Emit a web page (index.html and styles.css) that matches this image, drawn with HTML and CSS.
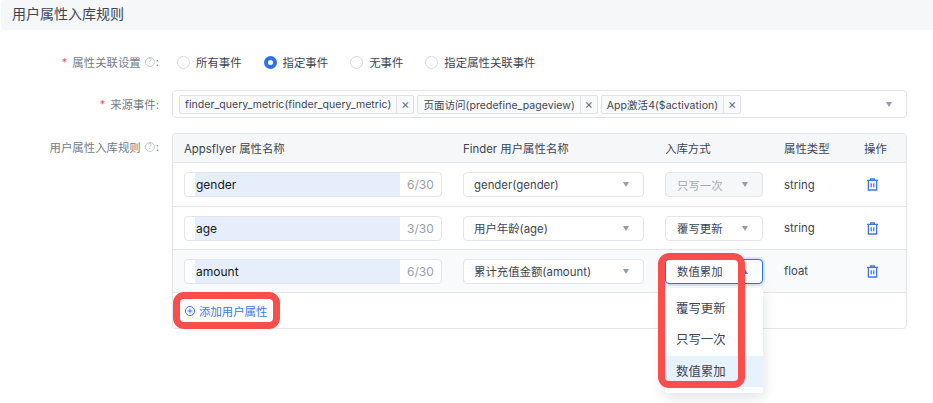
FILE: index.html
```html
<!DOCTYPE html>
<html lang="zh">
<head>
<meta charset="utf-8">
<title>用户属性入库规则</title>
<link rel="stylesheet" href="styles.css">
</head>
<body>
<div class="title-bar">用户属性入库规则</div>
<form class="form">
  <div class="form-row row-radio">
    <div class="label"><span class="req">*</span>属性关联设置<span class="help">?</span>:</div>
    <div class="radios">
      <span class="radio-item"><i class="radio"></i>所有事件</span>
      <span class="radio-item"><i class="radio on"></i>指定事件</span>
      <span class="radio-item"><i class="radio"></i>无事件</span>
      <span class="radio-item"><i class="radio"></i>指定属性关联事件</span>
    </div>
  </div>
  <div class="form-row row-source">
    <div class="label"><span class="req">*</span>来源事件:</div>
    <div class="multi">
      <span class="tag"><span class="tag-text">finder_query_metric(finder_query_metric)</span><span class="tag-x">×</span></span>
      <span class="tag"><span class="tag-text">页面访问(predefine_pageview)</span><span class="tag-x">×</span></span>
      <span class="tag"><span class="tag-text">App激活4($activation)</span><span class="tag-x">×</span></span>
      <i class="arrow multi-arrow"></i>
    </div>
  </div>
  <div class="form-row">
    <div class="label label-top">用户属性入库规则<span class="help">?</span>:</div>
    <div class="table">
      <div class="tr th">
        <div>Appsflyer 属性名称</div>
        <div>Finder 用户属性名称</div>
        <div>入库方式</div>
        <div>属性类型</div>
        <div>操作</div>
      </div>
      <div class="tr first">
        <div class="input"><span class="input-text">gender</span><span class="count">6/30</span></div>
        <div class="select"><span>gender(gender)</span><i class="arrow"></i></div>
        <div class="select mode disabled"><span>只写一次</span><i class="arrow"></i></div>
        <div>string</div>
        <div><svg class="trash" viewBox="0 0 12 14"><path d="M0 2.500H12M4 2.500V.8H8V2.500M1.500 2.500V13H10.500V2.500M4.600 5.500V10M7.400 5.500V10" fill="none" stroke="#3d75f0" stroke-width="1.4"/></svg></div>
      </div>
      <div class="tr">
        <div class="input"><span class="input-text">age</span><span class="count">3/30</span></div>
        <div class="select"><span>用户年龄(age)</span><i class="arrow"></i></div>
        <div class="select mode"><span>覆写更新</span><i class="arrow"></i></div>
        <div>string</div>
        <div><svg class="trash" viewBox="0 0 12 14"><path d="M0 2.500H12M4 2.500V.8H8V2.500M1.500 2.500V13H10.500V2.500M4.600 5.500V10M7.400 5.500V10" fill="none" stroke="#3d75f0" stroke-width="1.4"/></svg></div>
      </div>
      <div class="tr active">
        <div class="input"><span class="input-text">amount</span><span class="count">6/30</span></div>
        <div class="select"><span>累计充值金额(amount)</span><i class="arrow"></i></div>
        <div class="mode-cell">
          <div class="select mode focus"><span>数值累加</span><i class="arrow up"></i></div>
          <div class="menu">
            <div class="opt">覆写更新</div>
            <div class="opt">只写一次</div>
            <div class="opt sel">数值累加</div>
          </div>
          <div class="mark mark-menu"></div>
        </div>
        <div>float</div>
        <div><svg class="trash" viewBox="0 0 12 14"><path d="M0 2.500H12M4 2.500V.8H8V2.500M1.500 2.500V13H10.500V2.500M4.600 5.500V10M7.400 5.500V10" fill="none" stroke="#3d75f0" stroke-width="1.4"/></svg></div>
      </div>
      <div class="add-row">
        <span class="add"><svg class="plus" viewBox="0 0 12 12"><circle cx="6" cy="6" r="4.600" fill="none" stroke="#3d75f0"/><path d="M3.500 6H8.500M6 3.500V8.500" stroke="#3d75f0"/></svg>添加用户属性<span class="mark mark-add"></span></span>
      </div>
    </div>
  </div>
</form>
</body>
</html>
```
FILE: styles.css
```css
* { box-sizing: border-box; }
html, body { margin: 0; height: 403px; overflow: hidden; background: #fff; }
body {
  font-family: "Inter", "Noto Sans CJK SC", sans-serif;
  font-size: 11.4px;
  color: #3d4453;
  padding-left: 1px;
}
.title-bar {
  height: 30px;
  line-height: 28px;
  padding-left: 11px;
  font-size: 14px;
  color: #3d4453;
  background: #f6f7f9;
  border-radius: 3px 0 0 3px;
}
.form { padding-top: 17px; display: flex; flex-direction: column; }
.form-row { display: flex; padding-right: 26px; }
.row-radio { height: 30px; align-items: center; margin-bottom: 13px; }
.row-source { margin-bottom: 15px; }
.label {
  width: 171px;
  padding-right: 13px;
  flex: none;
  display: flex;
  align-items: center;
  justify-content: flex-end;
  color: #767b87;
}
.label-top { height: 28px; align-self: flex-start; }
.req { color: #f5565b; margin-right: 5px; font-size: 11px; }
.help {
  width: 10px; height: 10px; margin: 0 1px 0 4px;
  border: 1px solid #c8cbd2; border-radius: 50%;
  color: #b4b8c0; font-size: 7px; line-height: 8px; text-align: center;
}
.radios { display: flex; gap: 22px; padding-left: 5px; }
.radio-item { display: flex; align-items: center; gap: 6px; }
.radio { width: 13px; height: 13px; border: 1px solid #d6d9df; border-radius: 50%; background: #fff; }
.radio.on { border: 4px solid #2f6fed; }
.multi {
  flex: 1; height: 28px;
  display: flex; align-items: center; gap: 3px;
  padding-left: 6px;
  border: 1px solid #e3e5ea; border-radius: 4px;
}
.tag {
  height: 19px; display: flex; align-items: center;
  background: #f9fafb; border: 1px solid #dfe1e6; border-radius: 2px;
  font-size: 10.5px;
  letter-spacing: .05px;
}
.tag-text { padding: 0 5px; white-space: nowrap; }
.tag-x {
  width: 17px; height: 17px; line-height: 16px; text-align: center;
  border-left: 1px solid #dfe1e6; color: #6b7080; font-size: 13px;
}
.arrow {
  width: 0; height: 0; flex: none;
  border: 3.5px solid transparent; border-top: 5px solid #979ba5; border-bottom: 0;
}
.arrow.up { border-top: 0; border-bottom: 5px solid #3d75f0; }
.multi-arrow { margin-left: auto; margin-right: 14px; }
.table {
  flex: 1;
  border: 1px solid #e3e5ea; border-radius: 4px;
}
.tr {
  display: grid;
  grid-template-columns: 279px 202px 119px 80px 1fr;
  align-items: center;
  height: 43px;
  padding-left: 11px;
  border-bottom: 1px solid #e3e5ea;
}
.tr.th { height: 29px; background: #f6f7f9; border-radius: 4px 4px 0 0; }
.tr.first { height: 44px; }
.tr.active { background: #f9fafc; }
.input {
  width: 258px; height: 25px;
  display: flex; align-items: center;
  background: #fff; border: 1px solid #e3e5ea; border-radius: 4px;
}
.input-text {
  width: 205px; height: 23px; margin-left: 10px; padding-left: 1px;
  background: #e6eefb; color: #15181f; line-height: 23px; font-size: 12px;
}
.count { margin-left: 7px; color: #9a9ea8; font-size: 12px; }
.select {
  width: 181px; height: 25px;
  display: flex; align-items: center; justify-content: space-between;
  padding: 0 14px 0 10px;
  background: #fff; border: 1px solid #e3e5ea; border-radius: 4px;
}
.select.mode { width: 98px; padding-left: 11px; }
.select.disabled { background: #f6f7f9; color: #a3a7b0; }
.select.focus { border-color: #2f6fed; box-shadow: 0 0 0 2px #d6e4fc; }
.mode-cell { position: relative; }
.menu {
  position: absolute; left: 0; top: 29px; z-index: 2;
  width: 98px; height: 105px; padding-top: 5px;
  background: #fff; border-radius: 3px;
  box-shadow: 0 4px 14px rgba(30, 40, 60, .15);
}
.opt { height: 31.500px; line-height: 31px; padding-left: 11px; font-size: 12.4px; }
.opt.sel { background: #e8f2fc; }
.trash { display: block; width: 11px; height: 13px; margin-left: 3px; }
.add-row { height: 35px; display: flex; align-items: center; padding-left: 11px; }
.add { position: relative; display: flex; align-items: center; gap: 3px; color: #3d75f0; }
.plus { width: 12px; height: 12px; }
.mark {
  position: absolute; z-index: 3;
  border: 7px solid #fb4d4b; border-radius: 11px;
  pointer-events: none;
}
.mark-add { left: -11px; top: -11px; width: 107px; height: 37px; }
.mark-menu { left: -7px; top: -6px; width: 87px; height: 135px; }
```
